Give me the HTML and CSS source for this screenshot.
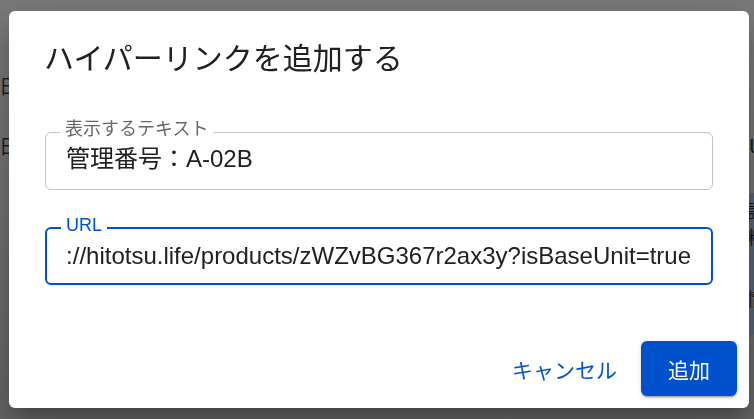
FILE: index.html
```html
<!DOCTYPE html>
<html lang="ja">
<head>
<meta charset="utf-8">
<title>ハイパーリンクを追加する</title>
<link rel="stylesheet" href="styles.css">
</head>
<body>
<div class="page">
  <div class="page-left">
    <span class="glyph g1">日</span>
    <span class="glyph g2">日</span>
  </div>
  <div class="page-right">
    <span class="glyph g3">U</span>
    <div class="strip">
      <span class="sglyph">詳</span>
      <span class="sglyph">料</span>
      <span class="sglyph s3">情</span>
    </div>
  </div>
</div>

<div class="overlay">
  <div class="dialog" role="dialog">
    <h2 class="title">ハイパーリンクを追加する</h2>
    <div class="fields">
      <div class="field">
        <span class="label">表示するテキスト</span>
        <div class="value">管理番号：A-02B</div>
      </div>
      <div class="field focused">
        <span class="label">URL</span>
        <div class="value scroll"><span class="url">https://hitotsu.life/products/zWZvBG367r2ax3y?isBaseUnit=true</span></div>
      </div>
    </div>
    <div class="actions">
      <button class="btn text">キャンセル</button>
      <button class="btn primary">追加</button>
    </div>
  </div>
</div>
</body>
</html>
```
FILE: styles.css
```css
html, body {
  margin: 0;
  padding: 0;
  height: 100%;
  overflow: hidden;
}

body {
  font-family: "Liberation Sans", "Noto Sans CJK JP", sans-serif;
  background: linear-gradient(180deg, #7b7b7b 0%, #737373 50%, #666666 100%);
}

.page {
  height: 100vh;
  display: flex;
  justify-content: space-between;
}

.page-left {
  width: 9px;
  display: flex;
  flex-direction: column;
  overflow: hidden;
}

.glyph {
  font-family: "Noto Sans CJK JP", sans-serif;
  font-size: 20px;
  line-height: 20px;
  color: #1e1e1e;
  white-space: nowrap;
}

.g1 { margin-top: 76px; margin-left: -1px; }
.g2 { margin-top: 40px; margin-left: -1px; }

.page-right {
  width: 5px;
  display: flex;
  flex-direction: column;
  overflow: hidden;
}

.g3 {
  margin-top: 136px;
  font-family: "Liberation Sans", sans-serif;
  font-size: 22px;
  line-height: 22px;
}

.strip {
  margin-top: 35px;
  height: 142px;
  background: #5b6375;
  display: flex;
  flex-direction: column;
}

.sglyph {
  font-family: "Noto Sans CJK JP", sans-serif;
  font-size: 18px;
  line-height: 18px;
  color: #1a1a1a;
  margin-top: 8px;
  margin-left: -2px;
}

.s3 { margin-top: 44px; }

.overlay {
  position: fixed;
  inset: 0;
  display: flex;
  align-items: flex-start;
}

.dialog {
  box-sizing: border-box;
  width: 740px;
  height: 397px;
  margin: 11px 5px 0 9px;
  background: #ffffff;
  border-radius: 6px;
  display: flex;
  flex-direction: column;
  box-shadow: 0 11px 15px -7px rgba(0,0,0,0.2), 0 24px 38px 3px rgba(0,0,0,0.14), 0 9px 46px 8px rgba(0,0,0,0.12);
}

.title {
  margin: 0;
  padding: 25px 35px 0;
  font-family: "Noto Sans CJK JP", sans-serif;
  font-size: 30px;
  line-height: 40px;
  font-weight: 400;
  color: #212121;
}

.fields {
  padding: 0 36px;
  display: flex;
  flex-direction: column;
  gap: 37px;
  margin-top: 56px;
}

.field {
  position: relative;
  box-sizing: border-box;
  height: 58px;
  border: 1px solid #c4c4c4;
  border-radius: 6px;
  padding: 11px 20px 0;
}

.field.focused {
  border: 2px solid #0052cc;
  padding: 12px 20px 0;
}

.label {
  position: absolute;
  top: -13px;
  left: 14px;
  padding: 0 5px;
  background: #ffffff;
  font-size: 18px;
  line-height: 18px;
  color: #666666;
  white-space: nowrap;
}

.focused .label {
  color: #0052cc;
  left: 14px;
}

.value {
  font-size: 24px;
  line-height: 30px;
  color: #212121;
  white-space: nowrap;
}

.scroll {
  overflow: hidden;
  display: flex;
  justify-content: flex-end;
}

.url {
  flex-shrink: 0;
}

.actions {
  margin-top: auto;
  padding: 0 12px 12px;
  display: flex;
  justify-content: flex-end;
  gap: 12px;
}

.btn {
  font-family: "Liberation Sans", "Noto Sans CJK JP", sans-serif;
  font-size: 21px;
  height: 55px;
  border: none;
  border-radius: 6px;
  cursor: pointer;
}

.btn.text {
  background: transparent;
  color: #0052cc;
  padding: 0 12px;
}

.btn.primary {
  background: #0052cc;
  color: #ffffff;
  padding: 0 27px;
  box-shadow: 0 3px 1px -2px rgba(0,0,0,0.2), 0 2px 2px 0 rgba(0,0,0,0.14), 0 1px 5px 0 rgba(0,0,0,0.12);
}
```
